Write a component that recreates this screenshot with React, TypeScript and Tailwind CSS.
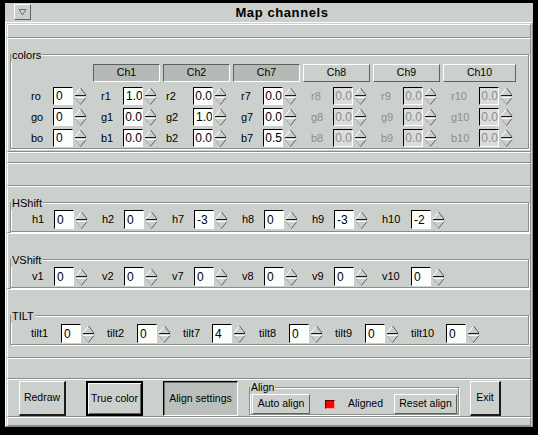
import React from 'react';

// window gray used everywhere (title bar, panels, label backgrounds)
const BG = 'bg-[#ccd0cc]';

type CellData = { label: string; value: string };

const colorRows: CellData[][] = [
    [
        { label: 'ro', value: '0' }, { label: 'r1', value: '1.0' }, { label: 'r2', value: '0.0' }, { label: 'r7', value: '0.0' },
        { label: 'r8', value: '0.0' }, { label: 'r9', value: '0.0' }, { label: 'r10', value: '0.0' },
    ],
    [
        { label: 'go', value: '0' }, { label: 'g1', value: '0.0' }, { label: 'g2', value: '1.0' }, { label: 'g7', value: '0.0' },
        { label: 'g8', value: '0.0' }, { label: 'g9', value: '0.0' }, { label: 'g10', value: '0.0' },
    ],
    [
        { label: 'bo', value: '0' }, { label: 'b1', value: '0.0' }, { label: 'b2', value: '0.0' }, { label: 'b7', value: '0.5' },
        { label: 'b8', value: '0.0' }, { label: 'b9', value: '0.0' }, { label: 'b10', value: '0.0' },
    ],
];

// label box widths per column, so the inputs land on the same grid as the original
const colorLabelW = ['w-[22px]', 'w-[22px]', 'w-[27px] -ml-[5px]', 'w-[22px]', 'w-[22px]', 'w-[22px]', 'w-[28px]'];
const shiftLabelW = ['w-[22px]', 'w-[22px]', 'w-[22px]', 'w-[22px]', 'w-[22px]', 'w-[29px]'];
const tiltLabelW = ['w-[30px]', 'w-[30px]', 'w-[29px]', 'w-[30px]', 'w-[30px]', 'w-[35px]'];

const channels = [
    { name: 'Ch1', on: true },
    { name: 'Ch2', on: true },
    { name: 'Ch7', on: true },
    { name: 'Ch8', on: false },
    { name: 'Ch9', on: false },
    { name: 'Ch10', on: false },
];

const hshift: CellData[] = [
    { label: 'h1', value: '0' }, { label: 'h2', value: '0' }, { label: 'h7', value: '-3' },
    { label: 'h8', value: '0' }, { label: 'h9', value: '-3' }, { label: 'h10', value: '-2' },
];
const vshift: CellData[] = [
    { label: 'v1', value: '0' }, { label: 'v2', value: '0' }, { label: 'v7', value: '0' },
    { label: 'v8', value: '0' }, { label: 'v9', value: '0' }, { label: 'v10', value: '0' },
];
const tilt: CellData[] = [
    { label: 'tilt1', value: '0' }, { label: 'tilt2', value: '0' }, { label: 'tilt7', value: '4' },
    { label: 'tilt8', value: '0' }, { label: 'tilt9', value: '0' }, { label: 'tilt10', value: '0' },
];

function Spinner() {
    return (
        <svg width="13" height="18" viewBox="0 0 13 18" className="ml-[1px] shrink-0">
            <line x1="1" y1="8" x2="6.5" y2="1" stroke="#ffffff" />
            <line x1="6.5" y1="1" x2="12" y2="8" stroke="#5e625e" />
            <line x1="1" y1="8.5" x2="12" y2="8.5" stroke="#1a1a1a" />
            <line x1="1" y1="10.5" x2="12" y2="10.5" stroke="#ffffff" />
            <line x1="1" y1="10.5" x2="6.5" y2="17.5" stroke="#a4a8a4" />
            <line x1="12" y1="10.5" x2="6.5" y2="17.5" stroke="#5e625e" />
        </svg>
    );
}

function Field({ value, disabled, tall }: { value: string; disabled?: boolean; tall?: boolean }) {
    const clipLeft = value.length > 2 && value !== '1.0';
    return (
        <div
            className={`flex w-[20px] shrink-0 items-center overflow-hidden border border-t-black border-l-black border-r-white border-b-white text-[12px] leading-none ${tall ? 'h-[19px]' : 'h-[18px]'} ${clipLeft ? 'justify-end' : 'justify-start pl-[2px]'} ${disabled ? 'bg-[#d9dcd9] text-[#8a8e8a]' : 'bg-[#fcfefc] text-black'}`}
        >
            <span className="shrink-0 whitespace-nowrap">{value}</span>
        </div>
    );
}

function Cell({ cell, lw, disabled, tall }: { cell: CellData; lw: string; disabled?: boolean; tall?: boolean }) {
    return (
        <div className="flex items-center">
            <span className={`shrink-0 whitespace-nowrap text-[11px] leading-none ${lw} ${disabled ? 'text-[#8a8e8a]' : 'text-black'}`}>
                {cell.label}
            </span>
            <Field value={cell.value} disabled={disabled} tall={tall} />
            <Spinner />
        </div>
    );
}

function Panel({ className, children }: { className?: string; children?: React.ReactNode }) {
    return (
        <div className={`shrink-0 border border-t-white border-l-white border-r-[#8a8e8a] border-b-[#8a8e8a] ${className ?? ''}`}>
            {children}
        </div>
    );
}

function Group({ label, className, children, small }: { label: string; className?: string; children?: React.ReactNode; small?: boolean }) {
    return (
        <div className={`relative border border-[#8a8e8a] shadow-[inset_1px_1px_0_#ffffff,1px_1px_0_#ffffff] ${className ?? ''}`}>
            <span className={`absolute left-0 ${small ? '-top-[8px] text-[10.5px]' : '-top-[7px] text-[11px]'} ${BG} px-[1px] leading-[14px]`}>
                {label}
            </span>
            {children}
        </div>
    );
}

const raised = 'border border-t-white border-l-white border-r-[#5e625e] border-b-[#5e625e]';
const sunken = 'border border-t-[#5e625e] border-l-[#5e625e] border-r-white border-b-white bg-[#b6bab6]';

export default function App() {
    return (
        <div className="h-[435px] w-[538px] overflow-hidden bg-black pl-[5px] pt-[3px] font-['Liberation_Sans',Arial,sans-serif] text-black">
            <div className={`flex h-[424px] w-[528px] flex-col ${BG}`}>
                {/* title bar */}
                <div className="flex h-[19px] shrink-0 items-start">
                    <div className={`ml-[9px] mt-[1px] flex h-[16px] w-[17px] items-center justify-center ${raised}`}>
                        <svg width="9" height="8" viewBox="0 0 9 8">
                            <polygon points="1,1.5 8,1.5 4.5,7" fill="none" stroke="#6a6e6a" />
                        </svg>
                    </div>
                    <div className="flex-1 text-center text-[13px] font-bold leading-[19px] tracking-[0.6px]">Map channels</div>
                </div>

                {/* frame */}
                <div className="flex flex-1 flex-col border border-t-white border-l-white border-r-[#8a8e8a] border-b-[#8a8e8a] px-[1px] pt-[1px]">
                    <Panel className="h-[14px]" />

                    <Panel className="h-[114px]">
                        <Group label="colors" className="ml-[2px] mr-[1px] mt-[15px] h-[95px] pl-[20px] pt-[9px]">
                            <div className="ml-[62px] flex h-[18px] gap-[3px]">
                                {channels.map((c) => (
                                    <div
                                        key={c.name}
                                        className={`flex h-[18px] items-center justify-center text-[10.5px] ${c.name === 'Ch10' ? 'w-[73px]' : 'w-[67px]'} ${c.on ? sunken : raised}`}
                                    >
                                        {c.name}
                                    </div>
                                ))}
                            </div>
                            <div className="mt-[5px] flex flex-col gap-[3px]">
                                {colorRows.map((row, ri) => (
                                    <div key={ri} className="grid h-[18px] grid-cols-[repeat(7,70px)]">
                                        {row.map((cell, ci) => (
                                            <Cell key={cell.label} cell={cell} lw={colorLabelW[ci]} disabled={ci >= 4} />
                                        ))}
                                    </div>
                                ))}
                            </div>
                        </Group>
                    </Panel>

                    <Panel className="h-[11px]" />
                    <Panel className="h-[23px]" />

                    <Panel className="h-[47px]">
                        <Group label="HShift" className="ml-[2px] mr-[1px] mt-[15px] h-[30px] pl-[21px] pt-[7px]">
                            <div className="grid h-[19px] grid-cols-[repeat(6,70px)]">
                                {hshift.map((cell, ci) => (
                                    <Cell key={cell.label} cell={cell} lw={shiftLabelW[ci]} tall />
                                ))}
                            </div>
                        </Group>
                    </Panel>

                    <Panel className="h-[56px]">
                        <Group label="VShift" className="ml-[2px] mr-[1px] mt-[25px] h-[29px] pl-[21px] pt-[7px]">
                            <div className="grid h-[19px] grid-cols-[repeat(6,70px)]">
                                {vshift.map((cell, ci) => (
                                    <Cell key={cell.label} cell={cell} lw={shiftLabelW[ci]} tall />
                                ))}
                            </div>
                        </Group>
                    </Panel>

                    <Panel className="h-[69px]">
                        <Group label="TILT" className="ml-[2px] mr-[1px] mt-[25px] h-[30px] pl-[20px] pt-[8px]">
                            <div className="grid h-[19px] grid-cols-[repeat(6,76px)]">
                                {tilt.map((cell, ci) => (
                                    <Cell key={cell.label} cell={cell} lw={tiltLabelW[ci]} tall />
                                ))}
                            </div>
                        </Group>
                    </Panel>

                    <Panel className="h-[21px]" />

                    {/* bottom buttons */}
                    <Panel className="flex h-[38px] items-start pt-[1px] text-[10.5px]">
                        <div className="ml-[11px] flex h-[35px] w-[47px] items-center justify-center border-t border-l border-t-white border-l-white border-r-2 border-b-2 border-r-[#1a1a1a] border-b-[#1a1a1a]">
                            Redraw
                        </div>
                        <div className="ml-[20px] flex h-[35px] w-[57px] items-center justify-center border-2 border-black shadow-[inset_1px_1px_0_#ffffff,inset_-1px_-1px_0_#5e625e]">
                            True color
                        </div>
                        <div className="ml-[20px] flex h-[35px] w-[75px] items-center justify-center border border-t-black border-l-black border-r-white border-b-white bg-[#bcc0bc] shadow-[inset_1px_1px_0_#6e726e]">
                            Align settings
                        </div>
                        <Group label="Align" small className="ml-[11px] mt-[6px] h-[28px] w-[210px] pt-[6px]">
                            <div className="flex h-[20px] items-center">
                                <div className={`ml-[2px] flex h-[20px] w-[58px] items-center justify-center ${raised}`}>Auto align</div>
                                <div className="ml-[15px] h-[9px] w-[10px] border border-t-[#5a0000] border-l-[#5a0000] border-r-[#ff9a9a] border-b-[#ff9a9a] bg-[#ff0000]" />
                                <span className="ml-[13px]">Aligned</span>
                                <div className={`ml-auto mr-[1px] flex h-[20px] w-[63px] items-center justify-center ${raised}`}>Reset align</div>
                            </div>
                        </Group>
                        <div className="ml-[11px] flex h-[35px] w-[31px] items-center justify-center border-t border-l border-t-white border-l-white border-r-2 border-b-2 border-r-[#1a1a1a] border-b-[#1a1a1a]">
                            Exit
                        </div>
                    </Panel>

                    <Panel className="h-[9px]" />
                </div>
            </div>
        </div>
    );
}
